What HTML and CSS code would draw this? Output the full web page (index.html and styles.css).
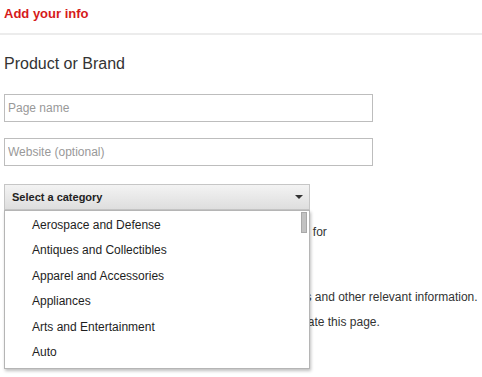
FILE: index.html
```html
<!DOCTYPE html>
<html lang="en">
<head>
    <meta charset="UTF-8">
    <title>Add your info</title>
    <link rel="stylesheet" href="styles.css">
</head>
<body>
    <div class="header">
        <h1>Add your info</h1>
    </div>

    <div class="content">
        <h2>Product or Brand</h2>

        <input class="field" type="text" placeholder="Page name">
        <input class="field" type="text" placeholder="Website (optional)">

        <div class="select-wrap">
            <div class="select">
                <span>Select a category</span>
                <span class="arrow"></span>
            </div>

            <!-- open dropdown list -->
            <div class="dropdown">
                <div class="option">Aerospace and Defense</div>
                <div class="option">Antiques and Collectibles</div>
                <div class="option">Apparel and Accessories</div>
                <div class="option">Appliances</div>
                <div class="option">Arts and Entertainment</div>
                <div class="option">Auto</div>
                <div class="scroll-thumb"></div>
            </div>
        </div>

        <div class="info">
            <p class="line">Choose a category that best fits your product and a name for</p>
            <p class="line gap">Describe your brand with a useful description, its products and other relevant information.</p>
            <p class="line">Your page is public and only the admins you add can update this page.</p>
        </div>
    </div>
</body>
</html>
```

FILE: styles.css
```css
body {
    margin: 0;
    min-height: 377px;
    font-family: "Liberation Sans", Arial, sans-serif;
    color: #333;
    background: white;
}
.header {
    height: 33px;
    border-bottom: 2px solid #ececec;
    padding: 0 4px;
}
.header h1 {
    margin: 0;
    padding-top: 6px;
    font-size: 13px;
    font-weight: bold;
    color: #d61a1a;
}
.content {
    padding: 0 4px;
}
.content h2 {
    margin: 19px 0 0;
    font-size: 16px;
    font-weight: normal;
    color: #333;
    line-height: 20px;
}
.field {
    display: block;
    box-sizing: border-box;
    width: 369px;
    height: 28px;
    margin: 20px 0 0;
    padding: 0 3px;
    border: 1px solid #bdbdbd;
    font-family: "Liberation Sans", Arial, sans-serif;
    font-size: 12px;
    color: #333;
}
.field + .field {
    margin-top: 16px;
}
.field::placeholder {
    color: #999;
}
.select-wrap {
    position: relative;
    width: 306px;
    margin-top: 18px;
}
.select {
    box-sizing: border-box;
    height: 26px;
    display: flex;
    align-items: center;
    justify-content: space-between;
    padding: 0 6px 0 7px;
    border: 1px solid #c6c6c6;
    background: linear-gradient(#f3f3f3, #dedede);
    font-size: 11px;
    font-weight: bold;
    color: #222;
}
.arrow {
    width: 0;
    height: 0;
    border-left: 4px solid transparent;
    border-right: 4px solid transparent;
    border-top: 4px solid #333;
}
.dropdown {
    position: absolute;
    top: 26px;
    left: 0;
    box-sizing: border-box;
    width: 306px;
    height: 159px;
    padding-top: 2px;
    border: 1px solid #b5b5b5;
    background: white;
    box-shadow: 1px 2px 3px rgba(0, 0, 0, 0.25);
    z-index: 2;
}
.option {
    height: 25.4px;
    line-height: 25.4px;
    padding-left: 27px;
    font-size: 12px;
    color: #1e1e1e;
}
.scroll-thumb {
    position: absolute;
    top: 1px;
    right: 2px;
    width: 6px;
    height: 21px;
    background: #c2c2c2;
    border: 1px solid #a9a9a9;
    box-sizing: border-box;
}
.info {
    margin-top: 10px;
}
.line {
    margin: 0;
    white-space: nowrap;
    font-size: 12px;
    line-height: 25px;
    color: #333;
}
.line.gap {
    margin-top: 40px;
}
```
